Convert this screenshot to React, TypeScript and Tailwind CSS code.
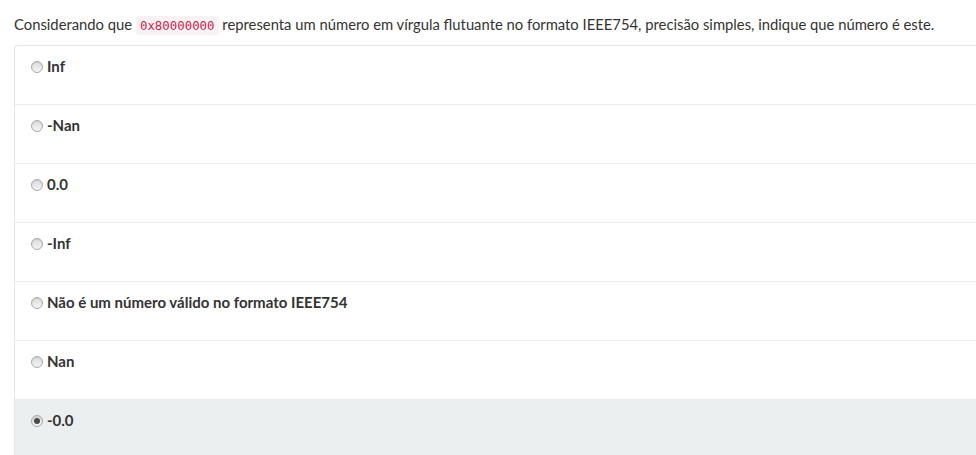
const options = [
  { label: 'Inf' },
  { label: '-Nan' },
  { label: '0.0' },
  { label: '-Inf' },
  { label: 'Não é um número válido no formato IEEE754' },
  { label: 'Nan' },
  { label: '-0.0', checked: true },
];

function Radio({ checked }: { checked?: boolean }) {
  return (
    <span className="relative inline-flex h-[12px] w-[12px] shrink-0 items-center justify-center rounded-full border border-[#a9a9a9] bg-gradient-to-b from-[#dcdcdc] to-[#f4f4f4] shadow-[inset_0_1px_1px_rgba(0,0,0,0.08)]">
      {checked && <span className="h-[6px] w-[6px] rounded-full bg-[#4a4a4a]" />}
    </span>
  );
}

export default function App() {
  return (
    <div className="min-h-screen bg-white pl-[14px] pt-[14px] font-['Lato','Open_Sans',sans-serif] text-[15px] leading-[21px] text-[#333]">
      <p className="whitespace-nowrap text-[14.8px]">
        Considerando que{' '}
        <code className="rounded-[4px] bg-[#f9f2f4] px-[4px] py-[2px] font-['DejaVu_Sans_Mono',monospace] text-[12.4px] text-[#c7254e]">
          0x80000000
        </code>{' '}
        representa um número em vírgula flutuante no formato IEEE754, precisão simples, indique que número é este.
      </p>
      <div className="mt-[9px] overflow-hidden rounded-tl-[4px] border-l border-t border-[#e6e6e6]">
        {options.map((o, i) => (
          <div
            key={i}
            className={`flex h-[59px] items-start gap-[4px] pl-[16px] pt-[10px] ${i < options.length - 1 ? 'border-b border-[#ebebeb]' : ''} ${o.checked ? 'bg-[#ebeff0]' : ''}`}
          >
            <span className="flex h-[21px] items-center">
              <Radio checked={o.checked} />
            </span>
            <span className="font-bold">{o.label}</span>
          </div>
        ))}
      </div>
    </div>
  );
}
